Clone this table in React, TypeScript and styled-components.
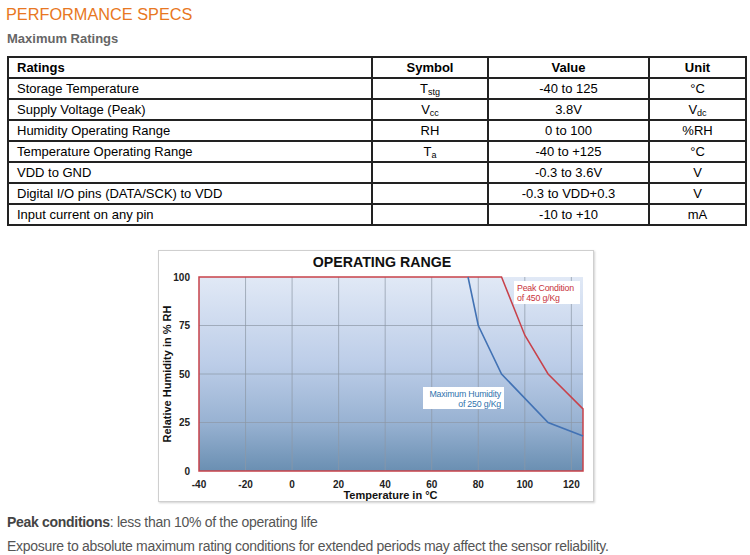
import React from "react";
import styled, { createGlobalStyle } from "styled-components";

const Global = createGlobalStyle`
  html, body { margin: 0; padding: 0; background: #fff; }
  body { font-family: "Liberation Sans", Arial, sans-serif; }
`;

const Page = styled.div`
  width: 750px;
  box-sizing: border-box;
  padding: 4px 5px 0 7px;
`;

const Title = styled.h1`
  margin: 0 0 0 -1px;
  font-size: 16.3px;
  line-height: 20px;
  font-weight: normal;
  color: #e87722;
`;

const Subtitle = styled.h2`
  margin: 7px 0 0;
  font-size: 13px;
  line-height: 16px;
  font-weight: bold;
  color: #666;
`;

const SpecTable = styled.table`
  margin-top: 9px;
  width: 738px;
  border-collapse: collapse;
  table-layout: fixed;
  font-size: 13px;
  color: #000;
`;

const Col = styled.col<{ $w: number }>`
  width: ${(p) => p.$w}px;
`;

const Th = styled.th<{ $align?: string }>`
  box-sizing: border-box;
  height: 21px;
  padding: 0 8px;
  border: 2px solid #222;
  text-align: ${(p) => p.$align || "center"};
  font-weight: bold;
  line-height: 19px;
`;

const Td = styled.td<{ $align?: string }>`
  box-sizing: border-box;
  height: 21px;
  padding: 0 8px;
  border: 2px solid #222;
  text-align: ${(p) => p.$align || "center"};
  line-height: 19px;
  white-space: nowrap;
  vertical-align: bottom;
  sub {
    font-size: 9px;
    vertical-align: -2px;
    line-height: 0;
  }
`;

const ChartFrame = styled.figure`
  margin: 24px auto 0;
  width: 434px;
  height: 250px;
  border: 1px solid #cfcfcf;
  box-shadow: 1px 1px 2px rgba(0, 0, 0, 0.18);
  background: #fff;
  svg { display: block; }
`;

const Note = styled.p<{ $top: number }>`
  margin: ${(p) => p.$top}px 0 0;
  font-size: 14px;
  line-height: 16px;
  color: #555;
  letter-spacing: -0.3px;
  b { color: #444; }
`;

const rows: [React.ReactNode, React.ReactNode, string, React.ReactNode][] = [
  ["Storage Temperature", <>T<sub>stg</sub></>, "-40 to 125", "°C"],
  ["Supply Voltage (Peak)", <>V<sub>cc</sub></>, "3.8V", <>V<sub>dc</sub></>],
  ["Humidity Operating Range", "RH", "0 to 100", "%RH"],
  ["Temperature Operating Range", <>T<sub>a</sub></>, "-40 to +125", "°C"],
  ["VDD to GND", "", "-0.3 to 3.6V", "V"],
  ["Digital I/O pins (DATA/SCK) to VDD", "", "-0.3 to VDD+0.3", "V"],
  ["Input current on any pin", "", "-10 to +10", "mA"],
];

const X0 = 198;
const X1 = 582;
const Y0 = 276;
const Y1 = 470;
const tx = (t: number) => X0 + ((t + 40) / 165) * (X1 - X0);
const ty = (h: number) => Y1 - (h / 100) * (Y1 - Y0);

const xTicks = [-40, -20, 0, 20, 40, 60, 80, 100, 120];
const yTicks = [0, 25, 50, 75, 100];

const pts = (a: [number, number][]) => a.map(([t, h]) => `${tx(t)},${ty(h)}`).join(" ");

const FONT = "Liberation Sans, Arial, sans-serif";

const OperatingRange = () => (
  <svg width={434} height={250} viewBox="158 250 434 250">
    <defs>
      <linearGradient id="plotBg" x1="0" y1="0" x2="0" y2="1">
        <stop offset="0" stopColor="#e1e9f6" />
        <stop offset="0.45" stopColor="#bccde8" />
        <stop offset="0.75" stopColor="#98b2d2" />
        <stop offset="1" stopColor="#6a8fb2" />
      </linearGradient>
    </defs>
    <text x={381} y={266} textAnchor="middle" fontSize={14.2} fontWeight="bold" fill="#111" fontFamily={FONT}>
      OPERATING RANGE
    </text>
    <rect x={X0} y={Y0} width={X1 - X0} height={Y1 - Y0} fill="url(#plotBg)" />
    {xTicks.slice(1).map((t) => (
      <line key={t} x1={tx(t)} x2={tx(t)} y1={Y0} y2={Y1} stroke="#8d98a6" strokeWidth={1} opacity={0.7} />
    ))}
    {[25, 50, 75].map((h) => (
      <line key={h} x1={X0} x2={X1} y1={ty(h)} y2={ty(h)} stroke="#8d98a6" strokeWidth={1} opacity={0.7} />
    ))}
    <polygon
      points={pts([[-40, 0], [-40, 100], [90, 100], [100, 70], [110, 50], [125, 32], [125, 0]])}
      fill="none"
      stroke="#c8414a"
      strokeWidth={1.5}
    />
    <polyline
      points={pts([[75.6, 100], [80, 75], [90, 50], [110, 25], [125, 18]])}
      fill="none"
      stroke="#4272b4"
      strokeWidth={1.6}
    />
    <rect x={513} y={280} width={66} height={23} fill="#fff" />
    <text fontSize={8.8} fill="#c8333c" fontFamily={FONT} letterSpacing={-0.2}>
      <tspan x={516} y={290}>Peak Condition</tspan>
      <tspan x={516} y={300}>of 450 g/Kg</tspan>
    </text>
    <rect x={422} y={386} width={81} height={22} fill="#fff" />
    <text fontSize={8.8} fill="#2f73ad" textAnchor="end" fontFamily={FONT} letterSpacing={-0.2}>
      <tspan x={500} y={395.5}>Maximum Humidity</tspan>
      <tspan x={500} y={405.5}>of 250 g/Kg</tspan>
    </text>
    {yTicks.map((h) => (
      <text key={h} x={189} y={ty(h) + 3.5} textAnchor="end" fontSize={10} fontWeight="bold" fill="#222" fontFamily={FONT}>
        {h}
      </text>
    ))}
    {xTicks.map((t) => (
      <text key={t} x={tx(t)} y={486.5} textAnchor="middle" fontSize={10} fontWeight="bold" fill="#222" fontFamily={FONT}>
        {t}
      </text>
    ))}
    <text x={389.5} y={498} textAnchor="middle" fontSize={11} fontWeight="bold" fill="#111" fontFamily={FONT}>
      Temperature in °C
    </text>
    <text
      transform="translate(170,373) rotate(-90)"
      x={0}
      y={0}
      textAnchor="middle"
      fontSize={11}
      fontWeight="bold"
      fill="#111"
      fontFamily={FONT}
    >
      Relative Humidity in % RH
    </text>
  </svg>
);

export default function App() {
  return (
    <>
      <Global />
      <Page>
        <Title>PERFORMANCE SPECS</Title>
        <Subtitle>Maximum Ratings</Subtitle>
        <SpecTable>
          <colgroup>
            <Col $w={364} />
            <Col $w={116} />
            <Col $w={161} />
            <Col $w={97} />
          </colgroup>
          <thead>
            <tr>
              <Th $align="left">Ratings</Th>
              <Th>Symbol</Th>
              <Th>Value</Th>
              <Th>Unit</Th>
            </tr>
          </thead>
          <tbody>
            {rows.map((r, i) => (
              <tr key={i}>
                <Td $align="left">{r[0]}</Td>
                <Td>{r[1]}</Td>
                <Td>{r[2]}</Td>
                <Td>{r[3]}</Td>
              </tr>
            ))}
          </tbody>
        </SpecTable>
        <ChartFrame>
          <OperatingRange />
        </ChartFrame>
        <Note $top={12}>
          <b>Peak conditions</b>: less than 10% of the operating life
        </Note>
        <Note $top={8}>
          Exposure to absolute maximum rating conditions for extended periods may affect the sensor reliability.
        </Note>
      </Page>
    </>
  );
}
